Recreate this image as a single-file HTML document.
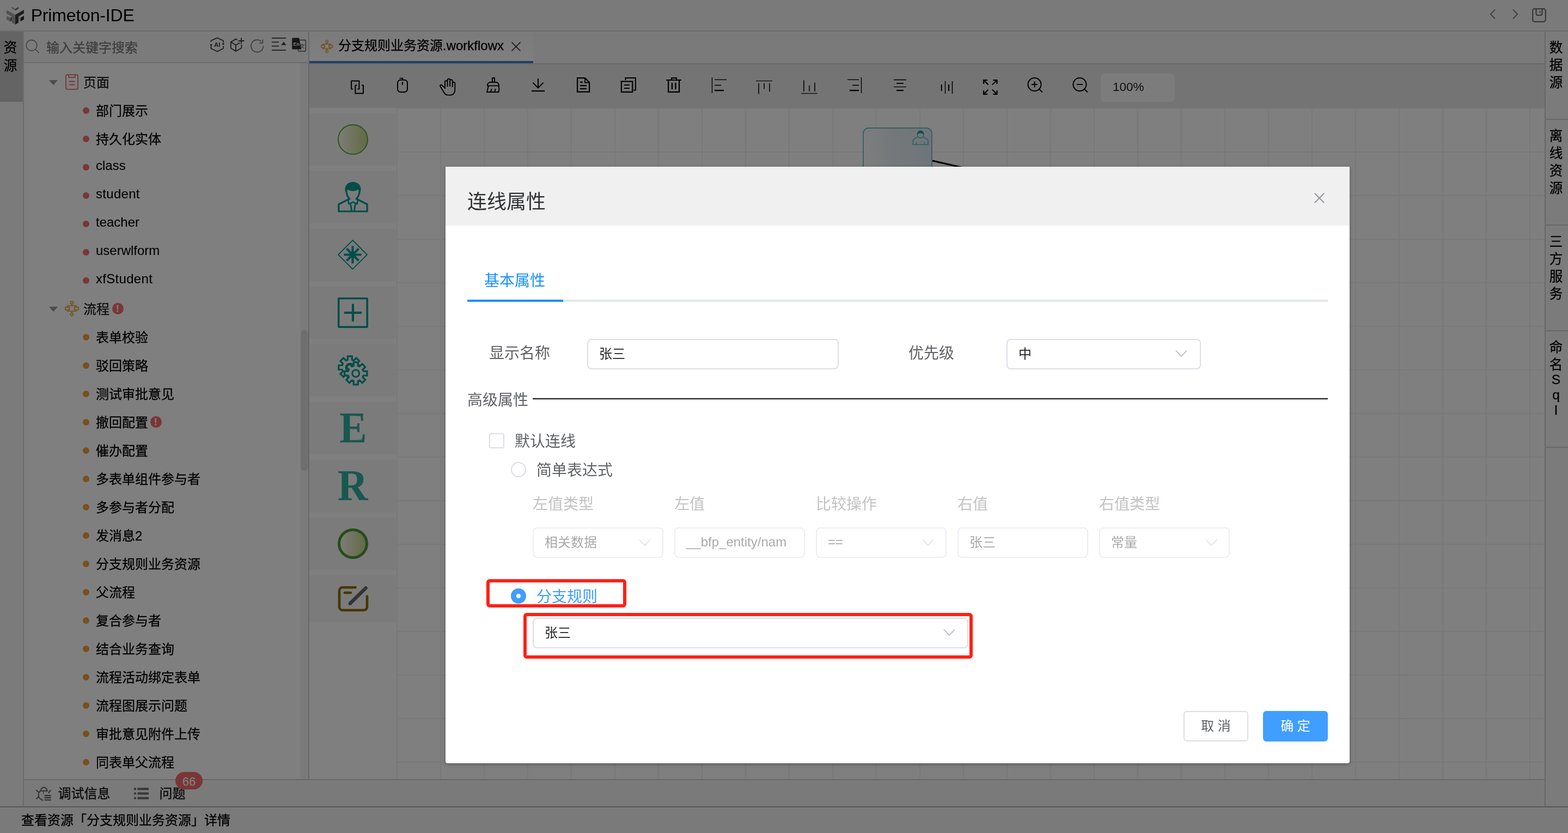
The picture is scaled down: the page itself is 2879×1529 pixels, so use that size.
<!DOCTYPE html>
<html lang="zh-CN">
<head>
<meta charset="utf-8">
<title>Primeton-IDE</title>
<style>
*{box-sizing:border-box;margin:0;padding:0}
html,body{width:2879px;height:1529px;overflow:hidden;background:#fff}
body{font-family:"Liberation Sans","Noto Sans CJK SC",sans-serif;color:#000;position:relative}
.a{position:absolute}
.t{position:absolute;white-space:nowrap;line-height:1}
#app{will-change:transform;-webkit-text-stroke:0.300px;position:absolute;left:0;top:0;width:2879px;height:1529px;background:#fff;overflow:hidden}
.mask{position:absolute;left:0;top:0;width:2879px;height:1529px;background:rgba(0,0,0,.5)}
svg{position:absolute;overflow:visible}
.row{position:absolute;left:44px;width:508px;height:52px}
.dot{position:absolute;left:108px;top:20px;width:12px;height:12px;border-radius:50%}
.lbl{position:absolute;left:132px;top:0.500px;height:52px;line-height:52px;font-size:24px;white-space:nowrap;color:#000}
.pal{position:absolute;left:568px;width:160px;height:96px;background:#f6f6f6}
.inp{position:absolute;height:56px;border:2px solid #dcdfe6;border-radius:8px;background:#fff;font-size:24px;line-height:52px;padding-left:20px;color:#222;white-space:nowrap;overflow:hidden}
.inp.dis{border-color:#edeef4;color:#aaa;background:#fff}
.h28{position:absolute;margin-top:2px;font-size:28px;line-height:40px;height:40px;white-space:nowrap;color:#606266}
.redbox{position:absolute;border:6px solid #ff2116;border-radius:6px}
svg text{white-space:pre}
.wex{width:21px;height:21px;color:#fff;font-size:16px;font-weight:bold;line-height:21px;text-align:center}
.vt{position:absolute;left:2836.500px;width:41px;text-align:center;font-size:24.500px;line-height:32px;color:#000}
</style>
</head>
<body>
<div id="app">
<div class="a" style="left:0;top:0;width:2879px;height:56px;background:#f4f4f4"></div>
<div class="a" style="left:0;top:56px;width:2879px;height:2px;background:#d6d6d6"></div>
<svg style="left:0;top:0" width="2879" height="1529" viewBox="0 0 2879 1529" ><polygon points="21.29,12.26 28.07,16.14 28.07,19.18 21.29,15.44" fill="#a8a8a8"/><polygon points="28.07,16.14 33.92,12.87 33.92,15.91 28.07,19.18" fill="#6a6a6a"/><polygon points="11.93,18.25 28.07,27.13 28.07,44.91 21.99,41.64 21.99,30.64 11.93,25.03" fill="#a4a4a4"/><polygon points="28.07,27.13 43.98,18.01 43.98,24.56 33.92,30.41 33.92,41.64 28.07,44.91" fill="#3c3c3c"/><polygon points="11.93,29.01 19.18,32.75 19.18,39.77 11.93,36.02" fill="#a8a8a8"/><polygon points="19.18,32.75 21.75,31.11 21.75,37.89 19.18,39.77" fill="#5a5a5a"/><polygon points="34.85,30.88 37.89,32.51 37.89,39.30 34.85,37.43" fill="#c4c4c4"/><polygon points="37.89,32.51 43.98,29.01 43.98,35.79 37.89,39.30" fill="#2c2c2c"/></svg>
<div class="t" style="left:56.700px;top:8px;font-size:32px;line-height:40px;letter-spacing:-0.17px;-webkit-text-stroke:0;color:#000">Primeton-IDE</div>
<svg style="left:0;top:0" width="2879" height="1529" viewBox="0 0 2879 1529" ><g fill="none" stroke="#6e6e6e" stroke-width="1.8"><path d="M2745 17.5L2737 26l8 8.5"/><path d="M2778 17.5l8 8.5-8 8.5"/></g><g fill="none" stroke="#707070" stroke-width="2.2"><rect x="2814.2" y="16.2" width="23.6" height="23.6" rx="3.5"/><path d="M2820.5 16.5v8.5a3 3 0 0 0 3 3h5a3 3 0 0 0 3-3v-8.5"/><path d="M2827.5 19.5v5" stroke-width="1.6"/></g></svg>
<div class="a" style="left:0;top:58px;width:42px;height:1424px;background:#f6f6f6"></div>
<div class="a" style="left:0;top:58px;width:42px;height:129px;background:#c8c8c8"></div>
<div class="a" style="left:42px;top:58px;width:2px;height:1424px;background:#d6d6d6"></div>
<div class="t" style="left:-2px;top:70.5px;width:42px;text-align:center;font-size:24.500px;line-height:33px;color:#000">资<br>源</div>
<div class="a" style="left:44px;top:58px;width:522px;height:57px;background:#f6f6f6"></div>
<div class="a" style="left:44px;top:114px;width:522px;height:2px;background:#d6d6d6"></div>
<svg style="left:0;top:0" width="2879" height="1529" viewBox="0 0 2879 1529" ><g fill="none" stroke="#808080" stroke-width="1.6"><circle cx="58" cy="83.3" r="9.8"/><path d="M65 90.5l6.8 7"/></g><g fill="none" stroke="#3a3a3a" stroke-width="1.8"><path d="M387.5 77v-2.5L398.8 69.6 410 74.5V78M410 84.5v4.500L398.8 94.6 387.500 89v-5"/></g><circle cx="387.6" cy="82.500" r="1.8" fill="#3a3a3a"/><circle cx="410" cy="80.6" r="1.8" fill="#3a3a3a"/><text x="398.800" y="85.500" font-family="'Liberation Sans',sans-serif" font-size="11.500" font-weight="bold" fill="#3a3a3a" text-anchor="middle">AI</text><g fill="none" stroke="#3a3a3a" stroke-width="1.8"><path d="M436 73.300L433 71.600 423.800 77v11.500l9.200 5.500 10.400-5.800V82"/><path d="M423.800 77l9.200 5.700 7.500-4.200M433 82.700V94"/><path d="M443 69.500v11M437.500 75h11"/></g><g fill="none" stroke="#7c7c7c" stroke-width="1.8"><path d="M483.500 84.500a11.300 11.300 0 1 1-4-8.700"/><path d="M482.300 72.500v6.300h-6"/></g><g fill="none" stroke="#3a3a3a" stroke-width="1.8"><path d="M499 69.800h26M499 77.300h13M499 84.700h13M499 92.200h26"/></g><path d="M516.300 82.700l4.600-6 4.600 6z" fill="#3a3a3a"/><rect x="547.500" y="73.500" width="13.800" height="20.500" rx="1.500" fill="none" stroke="#555" stroke-width="1.400"/><path d="M537.700 69.500h11.500l4 21h-15.500a1.500 1.500 0 0 1-1.500-1.500v-18a1.500 1.500 0 0 1 1.500-1.500z" fill="#2e2e2e"/><text x="538.600" y="83.800" font-family="'Liberation Sans',sans-serif" font-size="9" font-weight="bold" fill="#f4f4f4">En</text><text x="550.300" y="87.500" font-family="'Liberation Sans','Noto Sans CJK SC',sans-serif" font-size="9.500" fill="#444">文</text></svg>
<div class="t" style="left:85px;top:71px;font-size:24px;line-height:34px;color:#7c7c7c">输入关键字搜索</div>
<div class="a" style="left:44px;top:116px;width:522px;height:1314px;background:#fff"></div>
<div class="a" style="left:552px;top:116px;width:14px;height:1314px;background:#f4f4f4"></div>
<div class="a" style="left:552px;top:606px;width:14px;height:258px;border-radius:7px;background:#dedede"></div>
<div class="a" style="left:0;top:116px;width:566px;height:1314px;overflow:hidden">
<div class="row" style="top:9px">
<svg style="left:46px;top:22px" width="16" height="10" viewBox="0 0 16 10"><path d="M0 0h16L8 9.300z" fill="#999"/></svg>
<svg style="left:76px;top:11px" width="24" height="30" viewBox="0 0 24 30"><g fill="none" stroke="#f06a6a" stroke-width="1.800"><rect x="1" y="1.200" width="22" height="26.600" rx="2.500"/><path d="M6 1.500v4.300h12V1.500M6.500 13.500h11M6.500 19.500h11"/></g></svg>
<div class="lbl" style="left:109px;color:#1a1a1a">页面</div>
</div>
<div class="row" style="top:61px">
<div class="dot" style="background:#f56c6c"></div>
<div class="lbl">部门展示</div>
</div>
<div class="row" style="top:113px">
<div class="dot" style="background:#f56c6c"></div>
<div class="lbl">持久化实体</div>
</div>
<div class="row" style="top:165px">
<div class="dot" style="background:#f56c6c"></div>
<div class="lbl" style="top:-3px;-webkit-text-stroke:0.100px;">class</div>
</div>
<div class="row" style="top:217px">
<div class="dot" style="background:#f56c6c"></div>
<div class="lbl" style="top:-3px;-webkit-text-stroke:0.100px;letter-spacing:0.300px;">student</div>
</div>
<div class="row" style="top:269px">
<div class="dot" style="background:#f56c6c"></div>
<div class="lbl" style="top:-3px;-webkit-text-stroke:0.100px;">teacher</div>
</div>
<div class="row" style="top:321px">
<div class="dot" style="background:#f56c6c"></div>
<div class="lbl" style="top:-3px;-webkit-text-stroke:0.100px;">userwlform</div>
</div>
<div class="row" style="top:373px">
<div class="dot" style="background:#f56c6c"></div>
<div class="lbl" style="top:-3px;-webkit-text-stroke:0.100px;letter-spacing:0.300px;">xfStudent</div>
</div>
<div class="row" style="top:425px">
<svg style="left:46px;top:22px" width="16" height="10" viewBox="0 0 16 10"><path d="M0 0h16L8 9.300z" fill="#999"/></svg>
<svg style="left:75px;top:11px" width="26" height="28" viewBox="0 0 26 28"><g fill="none" stroke="#e6a23c" stroke-width="1.700"><circle cx="13" cy="3.500" r="2.600"/><circle cx="13" cy="25" r="2.600"/><path d="M13 6.100v3M13 19.300v3"/><rect x="4.700" y="9.200" width="16.600" height="10"/><rect x="1" y="11.800" width="7.400" height="4.800" fill="#fff"/><rect x="17.600" y="11.800" width="7.400" height="4.800" fill="#fff"/></g></svg>
<div class="lbl" style="left:109px;color:#1a1a1a">流程</div>
<div class="a" style="left:161.5px;top:14.5px;width:21px;height:21px;border-radius:50%;background:#f56c6c"></div><div class="a wex" style="left:161.5px;top:14.5px">!</div>
</div>
<div class="row" style="top:477px">
<div class="dot" style="background:#f0a040"></div>
<div class="lbl">表单校验</div>
</div>
<div class="row" style="top:529px">
<div class="dot" style="background:#f0a040"></div>
<div class="lbl">驳回策略</div>
</div>
<div class="row" style="top:581px">
<div class="dot" style="background:#f0a040"></div>
<div class="lbl">测试审批意见</div>
</div>
<div class="row" style="top:633px">
<div class="dot" style="background:#f0a040"></div>
<div class="lbl">撤回配置</div>
<div class="a" style="left:231.5px;top:14.5px;width:21px;height:21px;border-radius:50%;background:#f56c6c"></div><div class="a wex" style="left:231.5px;top:14.5px">!</div>
</div>
<div class="row" style="top:685px">
<div class="dot" style="background:#f0a040"></div>
<div class="lbl">催办配置</div>
</div>
<div class="row" style="top:737px">
<div class="dot" style="background:#f0a040"></div>
<div class="lbl">多表单组件参与者</div>
</div>
<div class="row" style="top:789px">
<div class="dot" style="background:#f0a040"></div>
<div class="lbl">多参与者分配</div>
</div>
<div class="row" style="top:841px">
<div class="dot" style="background:#f0a040"></div>
<div class="lbl">发消息2</div>
</div>
<div class="row" style="top:893px">
<div class="dot" style="background:#f0a040"></div>
<div class="lbl">分支规则业务资源</div>
</div>
<div class="row" style="top:945px">
<div class="dot" style="background:#f0a040"></div>
<div class="lbl">父流程</div>
</div>
<div class="row" style="top:997px">
<div class="dot" style="background:#f0a040"></div>
<div class="lbl">复合参与者</div>
</div>
<div class="row" style="top:1049px">
<div class="dot" style="background:#f0a040"></div>
<div class="lbl">结合业务查询</div>
</div>
<div class="row" style="top:1101px">
<div class="dot" style="background:#f0a040"></div>
<div class="lbl">流程活动绑定表单</div>
</div>
<div class="row" style="top:1153px">
<div class="dot" style="background:#f0a040"></div>
<div class="lbl">流程图展示问题</div>
</div>
<div class="row" style="top:1205px">
<div class="dot" style="background:#f0a040"></div>
<div class="lbl">审批意见附件上传</div>
</div>
<div class="row" style="top:1257px">
<div class="dot" style="background:#f0a040"></div>
<div class="lbl">同表单父流程</div>
</div>
</div>
<div class="a" style="left:566px;top:58px;width:2px;height:1372px;background:#d0d0d0"></div>
<div class="a" style="left:568px;top:58px;width:2270px;height:58px;background:#f4f4f4"></div>
<div class="a" style="left:568px;top:58px;width:411px;height:58px;background:linear-gradient(to bottom,#f6f6f6,#ffffff)"></div>
<div class="a" style="left:568px;top:116px;width:2270px;height:2px;background:#d2d2d2"></div>
<div class="a" style="left:568px;top:112px;width:411px;height:4px;background:#3f80cc"></div>
<svg style="left:589px;top:73.200px" width="22.300" height="24" viewBox="0 0 26 28"><g fill="none" stroke="#e6a23c" stroke-width="1.800"><circle cx="13" cy="3.500" r="2.600"/><circle cx="13" cy="25" r="2.600"/><path d="M13 6.100v3M13 19.300v3"/><rect x="4.700" y="9.200" width="16.600" height="10"/><rect x="1" y="11.800" width="7.400" height="4.800" fill="#fdfdfd"/><rect x="17.600" y="11.800" width="7.400" height="4.800" fill="#fdfdfd"/></g></svg>
<div class="t" style="left:621px;top:66px;font-size:24px;line-height:36px;color:#000">分支规则业务资源.workflowx</div>
<svg style="left:939px;top:77px" width="17" height="17" viewBox="0 0 17 17"><path d="M0.500 0.500l16 16M16.500 0.500L0.500 16.500" stroke="#111" stroke-width="1.400" fill="none"/></svg>
<div class="a" style="left:568px;top:118px;width:2270px;height:80px;background:#e9e9e9"></div>
<svg style="left:0;top:0" width="2879" height="1529" viewBox="0 0 2879 1529" ><g fill="none" stroke="#000" stroke-width="2.2" stroke-linejoin="miter"><path d="M648 163.600h-2.900V148.500h14.300v15.100h-2.900" stroke-width="2" stroke-linejoin="round"/><path d="M655.300 156.400h-2.900v15.100h14.600v-15.100h-2.900" stroke-width="2" stroke-linejoin="round"/><rect x="730" y="146.800" width="18" height="22.200" rx="5.500" stroke-width="2"/><path d="M739 150.200v5.500" stroke-width="2"/><path d="M739.300 146.500v-2.900h-5.800" stroke-width="1.800"/><path d="M817 163v-12.500a2.300 2.300 0 0 1 4.600 0V159M821.600 159v-12a2.300 2.300 0 0 1 4.600 0V159M826.200 159v-10.500a2.300 2.300 0 0 1 4.600 0V160M830.800 160v-7a2.300 2.300 0 0 1 4.600 0v11c0 6-3 10.600-9 10.600h-3.500c-3.500 0-5.500-1.500-7.500-4.500l-7-11.500c-1-2 1.500-3.800 3.500-2l4.100 4.400" stroke-width="1.900" stroke-linejoin="round"/><path d="M904 151v-8h4v8" stroke-width="1.900"/><path d="M895 157.400c0-3.800 2-6.400 5-6.400h11c3 0 5 2.600 5 6.400z" stroke-width="1.900"/><path d="M897 157.500l-3 11.500h21.500l1-5.500-1-6M901 168.500l1.800-5.500M908.500 168.500l1-5.500" stroke-width="1.900"/><path d="M988 144v17M978.500 151.800l9.500 9.600 9.500-9.600" stroke-width="2"/><path d="M976 167h24" stroke-width="2.200"/><path d="M1060.100 143.100h14l8 8v17.500h-22z"/><path d="M1074 143.500v8h8" stroke-width="1.800"/><path d="M1065 150.800h5M1065 157.100h12M1065 162.900h12" stroke-width="2.200"/><path d="M1148.500 147v-3.900h18.400v22.400h-3.500" stroke-width="2"/><rect x="1140.900" y="149.500" width="20.400" height="19.400"/><path d="M1146 156h10M1146 162h10" stroke-width="2.200"/><path d="M1223.300 147h27.700M1233 146.500v-3.400h9v3.400"/><path d="M1227.100 147v21.900h20V147"/><path d="M1234 152v12M1240.500 152v12" stroke-width="2.400"/></g><g fill="none" stroke="#000"><path d="M1307.500 142v29" stroke-width="1.400"/><path d="M1312 146.300h22" stroke-width="1.400"/><path d="M1312 156.500h12" stroke-width="1.600"/><path d="M1312 166h17" stroke-width="2.400"/><g stroke="#2a2a2a" stroke-linecap="round"><path d="M1388.500 148.400h29" stroke-width="1.500"/><path d="M1393 153.500v18.500" stroke-width="1.900"/><path d="M1403 153.500v9" stroke-width="1.800"/><path d="M1413 153.500v14" stroke-width="1.900"/></g><g stroke="#2a2a2a" stroke-linecap="round"><path d="M1471.500 171.500h29" stroke-width="1.500"/><path d="M1476 148v19" stroke-width="1.900"/><path d="M1486 157.500v9.500" stroke-width="1.800"/><path d="M1496 152.500v14.500" stroke-width="1.900"/></g><path d="M1581.500 142v29" stroke-width="1.400"/><path d="M1556 146.300h21" stroke-width="1.400"/><path d="M1565 156.500h12" stroke-width="1.600"/><path d="M1560 166h17" stroke-width="2.400"/><path d="M1641 146.500h23" stroke-width="1.600"/><path d="M1646 153h13" stroke-width="1.800"/><path d="M1641 159.500h23" stroke-width="1.300"/><path d="M1646 166h13" stroke-width="2.200"/><path d="M1728.700 155v12" stroke-width="2"/><path d="M1735.500 149v23" stroke-width="1.400"/><path d="M1742 155v12" stroke-width="2.200"/><path d="M1748.500 149v23" stroke-width="1.600"/><g stroke-width="2.200"><path d="M1806.100 154v-6.900h7M1806.500 147.500l8 8M1823.500 147.100h7v7M1830 147.500l-8 8M1806.100 166v6.900h7M1806.500 172.500l8-8M1830.500 166v6.900h-7M1830 172.500l-8-8"/></g><g stroke-width="2"><circle cx="1899.500" cy="155" r="12"/><path d="M1908 163.500l5.800 5.800M1894 155h11M1899.500 149.500v11"/><circle cx="1982.500" cy="155" r="12"/><path d="M1991 163.500l5.800 5.800M1977 155h11"/></g></g></svg>
<div class="a" style="left:2021px;top:135px;width:136px;height:52px;border-radius:8px;background:#f9f9fb"></div>
<div class="t" style="left:2043px;top:142px;font-size:22.5px;line-height:36px;-webkit-text-stroke:0;color:#222">100%</div>
<div class="a" style="left:568px;top:198px;width:160px;height:1232px;background:#fff"></div>
<div class="pal" style="top:208px;height:96px"></div>
<div class="pal" style="top:314px;height:96px"></div>
<div class="pal" style="top:420px;height:96px"></div>
<div class="pal" style="top:526px;height:96px"></div>
<div class="pal" style="top:632px;height:96px"></div>
<div class="pal" style="top:738px;height:96px"></div>
<div class="pal" style="top:844px;height:96px"></div>
<div class="pal" style="top:950px;height:96px"></div>
<div class="pal" style="top:1056px;height:86px"></div>
<svg style="left:0;top:0" width="2879" height="1529" viewBox="0 0 2879 1529" ><defs><linearGradient id="gg" x1="0" y1="0" x2="1" y2="0"><stop offset="0" stop-color="#fbfbf3"/><stop offset="1" stop-color="#c3d585"/></linearGradient><linearGradient id="ng" x1="0" y1="0.500" x2="1" y2="0.300"><stop offset="0" stop-color="#fdfdfd"/><stop offset="0.500" stop-color="#e8f0f4"/><stop offset="1" stop-color="#dcebf8"/></linearGradient></defs><circle cx="648" cy="256" r="27" fill="url(#gg)" stroke="#5ba83a" stroke-width="2"/><g fill="none" stroke="#009a93" stroke-width="3.2" stroke-linejoin="round"><path d="M640.5 365.500l-18.600 9.500v13h52.200v-13l-18.600-9.500"/><path d="M639 367l1.500 7.500 7.500-3.700 7.500 3.700 1.500-7.500" stroke-width="2.600"/><path d="M643.800 374.500l1.700 12.500M652.200 374.500l-1.700 12.500" stroke-width="2.800"/><path d="M642.500 366.500c-1.500-3-6.500-6.500-6.500-15.500 0-7 5-11 12-11s12 4 12 11c0 9-5 12.500-6.500 15.500" stroke-width="3.200"/></g><path d="M634.500 352c-2.500-11 4-17.500 13.500-17.500s16 6.500 13.500 17.500c-1-2.500-2.500-4-4.500-4.500-2.500 1.800-5.500 2.700-9 2.700s-6.500-.9-9-2.700c-2 .5-3.500 2-4.500 4.500z" fill="#009a93" stroke="#009a93" stroke-width="1"/><g fill="none" stroke="#009a93"><path d="M647.500 441l26.500 26.500-26.500 26.500-26.500-26.500z" stroke-width="1.800"/><path d="M631.500 467.500h32M647.500 451.500v32M636.500 456.500l22 22M658.500 456.500l-22 22" stroke-width="4.200"/></g><g fill="none" stroke="#009a93"><rect x="621.700" y="547.700" width="52.500" height="52.500" rx="1.500" stroke-width="3.600"/><path d="M633.500 574h29M648 559.500v29" stroke-width="4.200" stroke-linecap="round"/></g><defs><mask id="gm" maskUnits="userSpaceOnUse" x="600" y="640" width="100" height="90"><rect x="600" y="640" width="100" height="90" fill="#fff"/><path d="M667.34 681.40 L673.92 681.40 L673.92 689.40 L667.34 689.40 L666.06 692.50 L670.71 697.15 L665.05 702.81 L660.40 698.16 L657.30 699.44 L657.30 706.02 L649.30 706.02 L649.30 699.44 L646.20 698.16 L641.55 702.81 L635.89 697.15 L640.54 692.50 L639.26 689.40 L632.68 689.40 L632.68 681.40 L639.26 681.40 L640.54 678.30 L635.89 673.65 L641.55 667.99 L646.20 672.64 L649.30 671.36 L649.30 664.78 L657.30 664.78 L657.30 671.36 L660.40 672.64 L665.05 667.99 L670.71 673.65 L666.06 678.30Z" fill="#000" stroke="#000" stroke-width="3.4"/></mask></defs><g fill="none" stroke="#009a93" stroke-width="3.2" stroke-linejoin="miter"><g mask="url(#gm)"><path d="M656.44 670.50 L663.02 670.50 L663.02 678.50 L656.44 678.50 L655.16 681.60 L659.81 686.25 L654.15 691.91 L649.50 687.26 L646.40 688.54 L646.40 695.12 L638.40 695.12 L638.40 688.54 L635.30 687.26 L630.65 691.91 L624.99 686.25 L629.64 681.60 L628.36 678.50 L621.78 678.50 L621.78 670.50 L628.36 670.50 L629.64 667.40 L624.99 662.75 L630.65 657.09 L635.30 661.74 L638.40 660.46 L638.40 653.88 L646.40 653.88 L646.40 660.46 L649.50 661.74 L654.15 657.09 L659.81 662.75 L655.16 667.40Z"/><circle cx="642.4" cy="674.5" r="6.600" stroke-width="4"/></g><path d="M667.34 681.40 L673.92 681.40 L673.92 689.40 L667.34 689.40 L666.06 692.50 L670.71 697.15 L665.05 702.81 L660.40 698.16 L657.30 699.44 L657.30 706.02 L649.30 706.02 L649.30 699.44 L646.20 698.16 L641.55 702.81 L635.89 697.15 L640.54 692.50 L639.26 689.40 L632.68 689.40 L632.68 681.40 L639.26 681.40 L640.54 678.30 L635.89 673.65 L641.55 667.99 L646.20 672.64 L649.30 671.36 L649.30 664.78 L657.30 664.78 L657.30 671.36 L660.40 672.64 L665.05 667.99 L670.71 673.65 L666.06 678.30Z"/><circle cx="653.3" cy="685.4" r="6.500" stroke-width="3"/><path d="M636.6 677.8A6.700 6.700 0 0 1 647.500 670.2" stroke-width="4.200"/></g><text transform="translate(648.3 812) scale(0.955 1.03)" x="0" y="0" font-family="'Liberation Serif',serif" font-weight="bold" font-size="79" fill="#32b09c" text-anchor="middle">E</text><text transform="translate(647.6 918) scale(0.975 1.03)" x="0" y="0" font-family="'Liberation Serif',serif" font-weight="bold" font-size="79" fill="#32b09c" text-anchor="middle">R</text><circle cx="648" cy="998" r="25.500" fill="url(#gg)" stroke="#4c9a36" stroke-width="5"/><g fill="none" stroke-linecap="round"><path d="M652.500 1078.300H629a6 6 0 0 0-6 6V1114a6 6 0 0 0 6 6h39a6 6 0 0 0 6-6v-19.500" stroke="#8a6d00" stroke-width="4.600"/><path d="M633 1088h11" stroke="#8a6d00" stroke-width="4.600"/><path d="M671.500 1079.500l-28.500 28" stroke="#666" stroke-width="6.500"/></g><path d="M640.500 1104.500l6 5.500-6.500 0.500z" fill="#666"/></svg>
<div class="a" style="left:728px;top:198px;width:2110px;height:1232px;background-color:#fff;background-image:linear-gradient(to right,#f2f2f2 2px,transparent 2px),linear-gradient(to bottom,#f2f2f2 2px,transparent 2px);background-size:80px 80px;background-position:0 0"></div>
<svg style="left:0;top:0" width="2879" height="1529" viewBox="0 0 2879 1529" ><rect x="1585" y="235" width="126" height="160" rx="10" fill="url(#ng)" stroke="#6cc0c0" stroke-width="1.800"/><path d="M1712 295l120 27.400" stroke="#000" stroke-width="3.200" fill="none"/><g fill="none" stroke="#5cb8b4" stroke-width="1.700" opacity="0.9"><path d="M1684.500 252l-6.500 3.500c-1 .6-1.500 1.500-1.500 2.500v7.500h27.500V258c0-1-.5-1.900-1.500-2.500l-6.500-3.500"/><path d="M1682.500 265v-4M1697.500 265v-4"/><circle cx="1690.200" cy="247.500" r="5.800"/></g><path d="M1684 247c0-4.500 2.500-7.500 6.200-7.500s6.200 3 6.200 7.500c-2-2-4-2.500-6.200-2.500s-4.200.5-6.200 2.500z" fill="#00a096"/></svg>
<div class="a" style="left:2838px;top:58px;width:41px;height:1424px;background:#f6f6f6"></div>
<div class="a" style="left:2836px;top:58px;width:2px;height:1424px;background:#d0d0d0"></div>
<div class="a" style="left:2838px;top:218px;width:41px;height:2px;background:#d0d0d0"></div>
<div class="a" style="left:2838px;top:412px;width:41px;height:2px;background:#d0d0d0"></div>
<div class="a" style="left:2838px;top:606px;width:41px;height:2px;background:#d0d0d0"></div>
<div class="a" style="left:2838px;top:820px;width:41px;height:2px;background:#d0d0d0"></div>
<div class="vt" style="top:72px">数<br>据<br>源</div>
<div class="vt" style="top:234px">离<br>线<br>资<br>源</div>
<div class="vt" style="top:428px">三<br>方<br>服<br>务</div>
<div class="vt" style="top:622px">命<br>名</div>
<div class="vt" style="top:683.400px;line-height:27.600px">S<br>q<br>l</div>
<div class="a" style="left:44px;top:1430px;width:2792px;height:52px;background:#f4f4f4"></div>
<div class="a" style="left:44px;top:1430px;width:2792px;height:2px;background:#d0d0d0"></div>
<svg style="left:0;top:0" width="2879" height="1529" viewBox="0 0 2879 1529" ><g fill="none" stroke="#6c6c6c" stroke-width="2.200"><path d="M75 1450.800a5.600 5.400 0 0 1 11.200 0" stroke-width="2.300"/><path d="M73 1451.700h15.500" stroke-width="2"/><path d="M73.600 1452c-3.800 4-4 9.500-.8 13.300l5.800 4.200"/><path d="M79.800 1452v5.600" stroke-width="1.200"/><path d="M66.300 1450.200l5.600 4.600M66.300 1466.500l5.600-4.700M93.300 1450.200l-4.600 6"/></g><g fill="none" stroke="#6c6c6c" stroke-width="2.400" stroke-linecap="round"><path d="M82.500 1460.200h10.300M82.500 1464.300h10.300M82.500 1468.400h10.300"/></g><g fill="#707070"><rect x="246" y="1446" width="4" height="4.200" rx="1"/><rect x="246" y="1454.400" width="4" height="4.200" rx="1"/><rect x="246" y="1462.900" width="4" height="4.200" rx="1"/><rect x="252.500" y="1446" width="20.500" height="4.200"/><rect x="252.500" y="1454.400" width="20.500" height="4.200"/><rect x="252.500" y="1462.900" width="20.500" height="4.200"/></g></svg>
<div class="t" style="left:106.500px;top:1439px;font-size:24px;line-height:36px;color:#111">调试信息</div>
<div class="t" style="left:292.500px;top:1439px;font-size:24px;line-height:36px;color:#111">问题</div>
<div class="a" style="left:322px;top:1417px;width:50px;height:32px;border-radius:16px;background:#f56c6c;color:#fff;font-size:22px;line-height:35px;text-align:center">66</div>
<div class="a" style="left:0;top:1482px;width:2879px;height:47px;background:#f4f4f4"></div>
<div class="a" style="left:0;top:1480px;width:2879px;height:2px;background:#b0b0b0"></div>
<div class="t" style="left:39px;top:1488px;font-size:24px;line-height:36px;color:#000">查看资源「分支规则业务资源」详情</div>
</div>
<div class="mask"></div>
<div class="a" style="left:818px;top:306px;width:1660px;height:1095px;background:#fff;border-radius:0 0 4px 4px;box-shadow:0 2px 6px rgba(0,0,0,.3);overflow:hidden;will-change:transform">
<div class="a" style="left:0;top:0;width:1660px;height:108px;background:#f0f0f0"></div>
<div class="t" style="left:40px;top:39px;font-size:36px;line-height:52px;color:#303133">连线属性</div>
<svg style="left:1593.500px;top:46.500px" width="21" height="21" viewBox="0 0 24 24"><path d="M2 2l20 20M22 2L2 22" stroke="#909399" stroke-width="2.200" fill="none"/></svg>
<div class="a" style="left:40px;top:244px;width:1580px;height:4px;background:#e4e7ed"></div>
<div class="a" style="left:40px;top:244px;width:176px;height:4px;background:#1890ff"></div>
<div class="h28" style="left:71px;top:188px;color:#1890ff">基本属性</div>
<div class="h28" style="left:80px;top:321px">显示名称</div>
<div class="inp" style="left:260px;top:316px;width:462px">张三</div>
<div class="h28" style="left:850px;top:321px">优先级</div>
<div class="inp" style="left:1030px;top:316px;width:357px">中</div>
<svg style="left:1340px;top:336px" width="22" height="14" viewBox="0 0 22 14"><path d="M1 1.500l10 10.500 10-10.500" stroke="#c0c4cc" stroke-width="2" fill="none"/></svg>
<div class="h28" style="left:40px;top:407px">高级属性</div>
<div class="a" style="left:160px;top:425px;width:1460px;height:2px;background:#111"></div>
<div class="a" style="left:80px;top:489px;width:28px;height:28px;border:2px solid #dcdfe6;border-radius:4px;background:#fff"></div>
<div class="h28" style="left:127px;top:483px">默认连线</div>
<div class="a" style="left:120px;top:542px;width:28px;height:28px;border:2px solid #dcdfe6;border-radius:50%;background:#fff"></div>
<div class="h28" style="left:167px;top:536px">简单表达式</div>
<div class="h28" style="left:160px;top:598px;color:#c3c3c3">左值类型</div>
<div class="inp dis" style="left:160px;top:662px;width:240px;">相关数据</div>
<svg style="left:355px;top:683px" width="22" height="14" viewBox="0 0 22 14"><path d="M1 1.500l10 10.500 10-10.500" stroke="#e4e6ec" stroke-width="2" fill="none"/></svg>
<div class="h28" style="left:420px;top:598px;color:#c3c3c3">左值</div>
<div class="inp dis" style="left:420px;top:662px;width:240px;line-height:50px;">__bfp_entity/nam</div>
<div class="h28" style="left:680px;top:598px;color:#c3c3c3">比较操作</div>
<div class="inp dis" style="left:680px;top:662px;width:240px;line-height:50px;">==</div>
<svg style="left:875px;top:683px" width="22" height="14" viewBox="0 0 22 14"><path d="M1 1.500l10 10.500 10-10.500" stroke="#e4e6ec" stroke-width="2" fill="none"/></svg>
<div class="h28" style="left:940px;top:598px;color:#c3c3c3">右值</div>
<div class="inp dis" style="left:940px;top:662px;width:240px;">张三</div>
<div class="h28" style="left:1200px;top:598px;color:#c3c3c3">右值类型</div>
<div class="inp dis" style="left:1200px;top:662px;width:240px;">常量</div>
<svg style="left:1395px;top:683px" width="22" height="14" viewBox="0 0 22 14"><path d="M1 1.500l10 10.500 10-10.500" stroke="#e4e6ec" stroke-width="2" fill="none"/></svg>
<div class="redbox" style="left:75px;top:757px;width:257px;height:52px"></div>
<div class="a" style="left:120px;top:774px;width:28px;height:28px;border-radius:50%;background:#409eff"></div>
<div class="a" style="left:130px;top:784px;width:8px;height:8px;border-radius:50%;background:#fff"></div>
<div class="h28" style="left:167px;top:768px;color:#409eff">分支规则</div>
<div class="redbox" style="left:143px;top:819px;width:825px;height:84px"></div>
<div class="inp" style="left:160px;top:828px;width:800px">张三</div>
<svg style="left:914px;top:847.5px" width="22" height="14" viewBox="0 0 22 14"><path d="M1 1.500l10 10.500 10-10.500" stroke="#c0c4cc" stroke-width="2" fill="none"/></svg>
<div class="a" style="left:1355px;top:999px;width:119px;height:56px;border:2px solid #dcdfe6;border-radius:6px;background:#fff;font-size:24px;line-height:52px;text-align:center;color:#606266">取 消</div>
<div class="a" style="left:1501px;top:999px;width:119px;height:56px;border-radius:6px;background:#409eff;font-size:24px;line-height:56px;text-align:center;color:#fff">确 定</div>
</div>
</body>
</html>
